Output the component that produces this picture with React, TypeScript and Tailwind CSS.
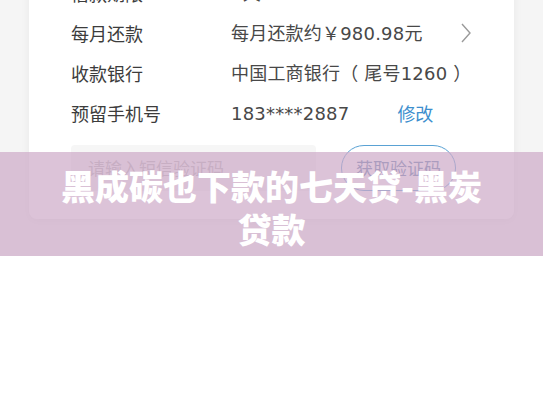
import React from "react"

const rows = [
  { label: "借款期限", value: "7天" },
  { label: "每月还款", value: "每月还款约￥980.98元", chevron: true },
  { label: "收款银行", value: "中国工商银行（ 尾号1260 ）" },
  { label: "预留手机号", value: "183****2887", edit: true },
]

export default function App() {
  return (
    <div className="relative w-full h-[408px] bg-white overflow-hidden" style={{ fontFamily: '"Noto Sans CJK SC", "Noto Sans", sans-serif' }}>
      <div className="h-[256px] bg-[#f5f5f5] overflow-hidden">
        <div className="ml-[29px] w-[485px] -mt-[27px] bg-white rounded-b-lg shadow-[0_2px_10px_rgba(0,0,0,0.06)] pl-[42px] pr-[40px] pb-[28px]">
          {rows.map((r) => (
            <div key={r.label} className="flex items-center h-[40px] text-[18px] text-[#3c3c3c]">
              <div className="w-[160px] shrink-0">{r.label}</div>
              <div className="flex-1 flex items-center text-[#484848] font-['DejaVu_Sans','Noto_Sans_CJK_SC',sans-serif]">
                <span className="tracking-[0.2px]">{r.value}</span>
                {r.edit && <span className="ml-[48px] text-[#3d8fce] font-['Noto_Sans_CJK_SC',sans-serif]">修改</span>}
                {r.chevron && (
                  <svg className="ml-auto mr-[1px]" width="14" height="24" viewBox="0 0 14 24" fill="none">
                    <polyline points="3,3 11,12 3,21" stroke="#9a9a9a" strokeWidth="1.4" />
                  </svg>
                )}
              </div>
            </div>
          ))}
          <div className="flex items-center mt-[12px] gap-[25px]">
            <div className="w-[245px] h-[46px] bg-[#f6f6f6] rounded flex items-center pl-[17px] text-[17px] text-[#b8b8b8]">
              请输入短信验证码
            </div>
            <div className="w-[115px] h-[46px] rounded-full border border-[#5aa2d4] flex items-center justify-center text-[17px] text-[#5b7ea8]">
              获取验证码
            </div>
          </div>
        </div>
      </div>
      <div className="absolute left-0 right-0 top-[152px] h-[104px] bg-[rgba(205,170,200,0.7)] flex items-center justify-center pt-[6px]">
        <div className="max-w-[440px] text-center text-white text-[34px] font-black leading-[43px]">
          黑成碳也下款的七天贷-黑炭贷款
        </div>
      </div>
    </div>
  )
}
